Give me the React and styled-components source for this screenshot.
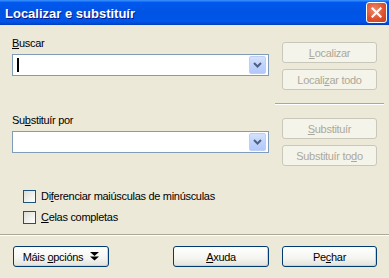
import React from "react";
import styled, { createGlobalStyle } from "styled-components";

const Global = createGlobalStyle`
  html, body { margin: 0; padding: 0; background: #ECE9D8; }
  * { box-sizing: border-box; }
`;

const App = () => {
    return (
        <Window>
            <Global />
            <TitleBar>
                <Title>Localizar e substituír</Title>
                <CloseButton>
                    <svg width="11" height="11" viewBox="0 0 11 11">
                        <path d="M1.5 1.5 L9.5 9.5 M9.5 1.5 L1.5 9.5" stroke="#fff" strokeWidth="2.2" strokeLinecap="square" />
                    </svg>
                </CloseButton>
            </TitleBar>
            <Body>
                <LeftCol>
                    <Label><u>B</u>uscar</Label>
                    <Combo>
                        <Caret />
                        <DropButton><Chevron /></DropButton>
                    </Combo>
                    <Label $top={38}>Su<u>b</u>stituír por</Label>
                    <Combo>
                        <DropButton><Chevron /></DropButton>
                    </Combo>
                    <Checks>
                        <CheckRow>
                            <CheckBox />
                            <span>Di<u>f</u>erenciar maiúsculas de minúsculas</span>
                        </CheckRow>
                        <CheckRow>
                            <CheckBox />
                            <span><u>C</u>elas completas</span>
                        </CheckRow>
                    </Checks>
                </LeftCol>
                <RightCol>
                    <Button disabled><span><u>L</u>ocalizar</span></Button>
                    <Button disabled><span>Locali<u>z</u>ar todo</span></Button>
                    <Divider />
                    <Button disabled><span><u>S</u>ubstituír</span></Button>
                    <Button disabled><span>Substituír to<u>d</u>o</span></Button>
                </RightCol>
            </Body>
            <Separator />
            <Footer>
                <Button $width={96}>
                    <span>Máis <u>o</u>pcións</span>
                    <DoubleArrow />
                </Button>
                <Spacer />
                <Button $width={96}><span><u>A</u>xuda</span></Button>
                <Button $width={95}><span>Pe<u>c</u>har</span></Button>
            </Footer>
        </Window>
    )
}
export default App

const Chevron = () => (
    <svg width="9" height="6" viewBox="0 0 9 6">
        <path d="M1 1 L4.5 4.5 L8 1" fill="none" stroke="#4D6185" strokeWidth="2" />
    </svg>
)

const DoubleArrow = () => (
    <svg width="9" height="9" viewBox="0 0 9 9" style={{ marginLeft: 7 }}>
        <path d="M0 0 H9 L4.5 4 Z M0 4.5 H9 L4.5 8.5 Z" fill="#000" />
    </svg>
)

const Window = styled.div`
    width: 389px;
    height: 278px;
    background: #ECE9D8;
    display: flex;
    flex-direction: column;
    font-family: "Liberation Sans", Arial, sans-serif;
    font-size: 11px;
    letter-spacing: -0.3px;
    color: #000;
    overflow: hidden;
`
const TitleBar = styled.div`
    height: 25px;
    flex: none;
    display: flex;
    align-items: center;
    justify-content: space-between;
    padding: 0 2px 0 5px;
    background: linear-gradient(to bottom, #3D95FF 0%, #0058EE 10%, #0054E3 45%, #0055EA 85%, #0048D0 95%, #003DB8 100%);
`
const Title = styled.div`
    font-family: "Liberation Sans", Arial, sans-serif;
    font-weight: 700;
    font-size: 13px;
    letter-spacing: 0;
    color: #fff;
    text-shadow: 1px 1px 0 #0A1883;
    padding-top: 1px;
`
const CloseButton = styled.div`
    width: 21px;
    height: 21px;
    border: 1px solid #fff;
    border-radius: 3px;
    display: flex;
    align-items: center;
    justify-content: center;
    background: radial-gradient(circle at 40% 35%, #F08A6C 0%, #E0532E 55%, #C4401E 100%);
`
const Body = styled.div`
    display: flex;
    height: 209px;
    flex: none;
`
const LeftCol = styled.div`
    width: 257px;
    margin-left: 12px;
    display: flex;
    flex-direction: column;
`
const Label = styled.div`
    line-height: 13px;
    margin-top: ${p => p.$top || 12}px;
    margin-bottom: 4px;
`
const Combo = styled.div`
    height: 22px;
    border: 1px solid #7F9DB9;
    background: #fff;
    display: flex;
    align-items: center;
    justify-content: space-between;
    padding: 0 2px 0 4px;
`
const Caret = styled.span`
    width: 2px;
    height: 14px;
    background: #000;
`
const DropButton = styled.span`
    width: 17px;
    height: 18px;
    margin-left: auto;
    border-radius: 2px;
    display: flex;
    align-items: center;
    justify-content: center;
    background: linear-gradient(to bottom, #D4E2FC 0%, #C1D3FB 50%, #B2C8F9 100%);
    border: 1px solid #BDCEF7;
`
const Checks = styled.div`
    margin-top: 37px;
    margin-left: 11px;
    display: flex;
    flex-direction: column;
    gap: 8px;
`
const CheckRow = styled.label`
    display: flex;
    align-items: center;
    gap: 5px;
    line-height: 13px;
`
const CheckBox = styled.span`
    width: 13px;
    height: 13px;
    flex: none;
    border: 1px solid #1C5180;
    background: linear-gradient(135deg, #DCDCD7 0%, #F2F2EE 60%, #fff 100%);
`
const RightCol = styled.div`
    width: 95px;
    margin-left: 13px;
    padding-top: 17px;
    display: flex;
    flex-direction: column;
    gap: 6px;
`
const Divider = styled.div`
    height: 2px;
    margin: 7px -7px 7px -7px;
    border-top: 1px solid #ACA899;
    border-bottom: 1px solid #fff;
`
const Button = styled.button`
    width: ${p => p.$width ? p.$width + "px" : "100%"};
    height: 21px;
    padding: 0;
    font-family: "Liberation Sans", Arial, sans-serif;
    font-size: 11px;
    letter-spacing: -0.3px;
    display: flex;
    align-items: center;
    justify-content: center;
    border-radius: 3px;
    border: 1px solid #003C74;
    color: #000;
    background: linear-gradient(to bottom, #FFFFFF 0%, #F4F4F0 60%, #E3E2DA 100%);
    box-shadow: inset -1px -1px 0 #D6D0C5;
    &:disabled {
        border-color: #C9C7BA;
        color: #ACA899;
        background: #F5F4EA;
        box-shadow: none;
    }
`
const Separator = styled.div`
    height: 2px;
    flex: none;
    border-top: 1px solid #ACA899;
    border-bottom: 1px solid #fff;
`
const Footer = styled.div`
    display: flex;
    gap: 13px;
    padding: 10px 12px 0 13px;
`
const Spacer = styled.div`
    flex: 1;
`
